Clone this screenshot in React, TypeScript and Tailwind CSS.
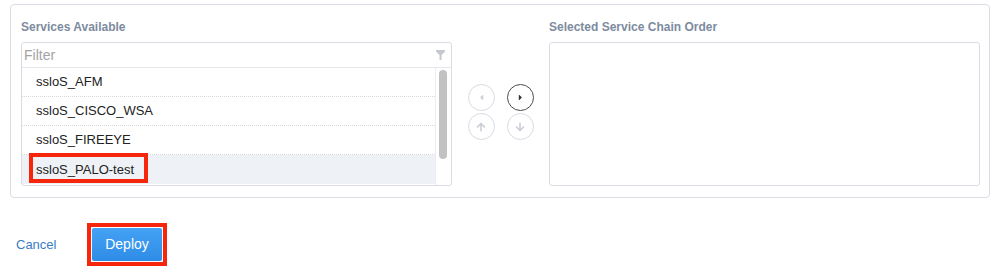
import React from 'react';
import { FaCaretLeft, FaCaretRight, FaArrowUp, FaArrowDown } from 'react-icons/fa';

const services = ['ssloS_AFM', 'ssloS_CISCO_WSA', 'ssloS_FIREEYE', 'ssloS_PALO-test'];

function FilterIcon() {
  return (
    <svg width="9" height="10" viewBox="0 0 9 10" className="text-[#c4c8ce]">
      <path d="M0 0h9v1.5L5.5 5v5h-2V5L0 1.5z" fill="currentColor" />
    </svg>
  );
}

function RoundButton({ active, children }: { active?: boolean; children: React.ReactNode }) {
  return (
    <button
      className={
        active
          ? 'w-[27px] h-[27px] rounded-full border border-[#4a4a4a] bg-white flex items-center justify-center text-[#333]'
          : 'w-[27px] h-[27px] rounded-full border border-[#d6dbe3] bg-white flex items-center justify-center text-[#c9ced6]'
      }
    >
      {children}
    </button>
  );
}

export default function App() {
  return (
    <div className="w-[999px] h-[277px] bg-white font-['Liberation_Sans',Arial,sans-serif] pt-[4px]">
      {/* service chain panel */}
      <div className="ml-[10px] mr-[9px] h-[194px] border border-[#d9dde5] rounded-[4px] pl-[10px] pr-[9px] pt-[14px] flex">
        <div className="w-[431px] flex flex-col">
          <div className="text-[12px] leading-[16px] font-bold text-[#7d8ba0]">Services Available</div>
          <div className="mt-[7px] h-[144px] border border-[#d9dde3] rounded-[3px] flex flex-col overflow-hidden">
            <div className="h-[25px] border-b border-[#e3e6ea] flex items-center justify-between pl-[2px] pr-[6px]">
              <span className="text-[14px] text-[#a3a3a3]">Filter</span>
              <FilterIcon />
            </div>
            <div className="flex flex-1">
              <div className="flex-1 flex flex-col">
                {services.map((s, i) => (
                  <div
                    key={s}
                    className={
                      i === 3
                        ? 'relative h-[29px] bg-[#eef2f6] flex items-center pl-[14px] text-[13px] text-[#222]'
                        : 'relative h-[29px] border-b border-dotted border-[#d5d9de] flex items-center pl-[14px] text-[13px] text-[#222]'
                    }
                  >
                    {s}
                    {i === 3 && (
                      <span className="absolute left-[7px] top-[-2px] w-[119px] h-[30px] border-[4px] border-[#f5260c]" />
                    )}
                  </div>
                ))}
              </div>
              <div className="w-[16px] border-l border-[#eceef1] pl-[3px] pt-[2px]">
                <div className="w-[8px] h-[89px] rounded-full bg-[#c2c2c2]" />
              </div>
            </div>
          </div>
        </div>

        <div className="flex-1 flex justify-center pt-[65px]">
          <div className="grid grid-cols-2 gap-x-[12px] gap-y-[2px] h-fit">
            <RoundButton>
              <FaCaretLeft size={9} />
            </RoundButton>
            <RoundButton active>
              <FaCaretRight size={9} />
            </RoundButton>
            <RoundButton>
              <FaArrowUp size={10} />
            </RoundButton>
            <RoundButton>
              <FaArrowDown size={10} />
            </RoundButton>
          </div>
        </div>

        <div className="w-[431px] flex flex-col">
          <div className="text-[12px] leading-[16px] font-bold text-[#7d8ba0]">Selected Service Chain Order</div>
          <div className="mt-[7px] h-[144px] border border-[#d9dde3] rounded-[3px]" />
        </div>
      </div>

      {/* actions */}
      <div className="flex items-center pl-[16px] mt-[25px]">
        <a className="w-[71px] text-[13px] text-[#3a7dc4]">Cancel</a>
        <div className="border-[4px] border-[#f5260c] p-[1px]">
          <button className="w-[70px] h-[33px] rounded-[2px] bg-gradient-to-b from-[#43a2f4] to-[#2f8ce6] text-white text-[14px]">
            Deploy
          </button>
        </div>
      </div>
    </div>
  );
}
